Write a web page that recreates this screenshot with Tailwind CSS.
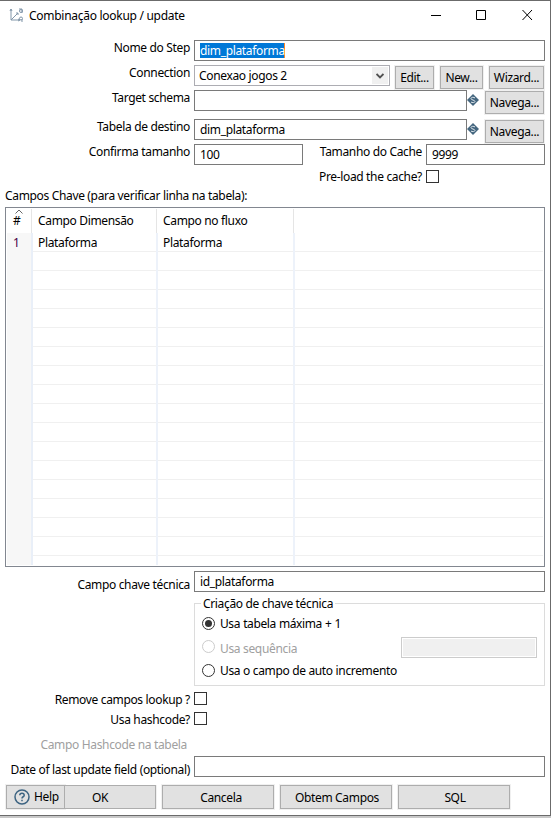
<!DOCTYPE html>
<html lang="pt-BR"><head><meta charset="utf-8"><title>Combinação lookup / update</title>
<script src="https://cdn.jsdelivr.net/npm/@tailwindcss/browser@4"></script></head>
<body class="w-[551px] h-[818px] overflow-hidden bg-[#c8c8c8] font-['Noto_Sans','Open_Sans',sans-serif] text-[12px] leading-4 tracking-[-0.34px] text-black whitespace-nowrap">
<main class="w-[551px] h-[816px] border-t border-r border-b border-[#6b6b6b] bg-white flex flex-col">
  <header class="h-[39px] shrink-0 flex">
    <svg class="ml-[9px] mt-[6px] size-4 shrink-0" viewBox="0 0 16 16" fill="none" stroke="#8297aa"><path d="M2 2v11h9M2 13l7-7M1 4l1-2 1 2M7 6h2v2M9 12l2 1-2 1"/><circle cx="12" cy="4" r="1.5"/><path d="M10 2h3v4"/><circle cx="12" cy="11.5" r="1.5"/><path d="M13 12v3"/></svg>
    <h1 class="ml-1 mt-[7px] w-[370px] tracking-[-0.28px]">Combinação lookup / update</h1>
    <svg class="ml-[31px] mt-[9px] w-[104px] h-[12px]" viewBox="0 0 104 12" fill="none" stroke="#000"><path d="M1 5.5h10"/><path d="M46.500 .5h9v9h-9z"/><path d="M92.500 0l9.500 10M102 0l-9.500 10"/></svg>
  </header>
  <section class="h-[25px] shrink-0 flex items-start">
    <label class="w-[190px] text-right">Nome do Step</label>
    <div class="ml-1 w-[351px] h-[21px] border border-[#7a7a7a] pl-[5px] pt-[2px]"><span class="inline-block h-[15px] leading-[15px] w-[85px] bg-[#0078d7] text-white border-r border-[#ff8728]">dim_plataforma</span></div>
  </section>
  <section class="h-[25px] shrink-0 flex items-start">
    <label class="w-[190px] text-right">Connection</label>
    <div class="ml-1 w-[196px] h-[21px] border border-[#adadb3] pl-1 flex items-center justify-between"><span>Conexao jogos 2</span><span class="w-4 h-[17px] mr-px bg-[#f0f0f0] flex items-center justify-center"><svg class="w-2 h-[6px]" viewBox="0 0 8 6" fill="none" stroke="#505050" stroke-width="1.9"><path d="M.5 1L4 4.500 7.500 1"/></svg></span></div>
    <button class="ml-[5px] mt-px w-[39px] h-[23px] border border-[#adadad] bg-[#e1e1e1] outline outline-[#f0f0f0]">Edit...</button>
    <button class="ml-[6px] mt-px w-[43px] h-[23px] border border-[#adadad] bg-[#e1e1e1] outline outline-[#f0f0f0]">New...</button>
    <button class="ml-[6px] mt-px w-[55px] h-[23px] border border-[#adadad] bg-[#e1e1e1] outline outline-[#f0f0f0]">Wizard...</button>
  </section>
  <section class="h-[29px] shrink-0 flex items-start">
    <label class="w-[190px] text-right">Target schema</label>
    <div class="ml-1 w-[273px] h-[21px] border border-[#7a7a7a]"></div>
    <svg class="mt-[4px] size-3" viewBox="0 0 12 12"><path d="M6 0l6 6-6 6-6-6z" fill="#44667f"/><path d="M8 4C7 3 4 3 4 4.600S8 6 8 7.400 5 9 4 8" fill="none" stroke="#e1e8ed"/></svg>
    <button class="ml-[6px] mt-px w-[59px] h-[23px] border border-[#adadad] bg-[#e1e1e1] outline outline-[#f0f0f0]">Navega...</button>
  </section>
  <section class="h-[25px] shrink-0 flex items-start">
    <label class="w-[190px] text-right">Tabela de destino</label>
    <div class="ml-1 w-[273px] h-[21px] border border-[#7a7a7a] pl-[5px] pt-[2px]">dim_plataforma</div>
    <svg class="mt-[4px] size-3" viewBox="0 0 12 12"><path d="M6 0l6 6-6 6-6-6z" fill="#44667f"/><path d="M8 4C7 3 4 3 4 4.600S8 6 8 7.400 5 9 4 8" fill="none" stroke="#e1e8ed"/></svg>
    <button class="ml-[6px] mt-px w-[59px] h-[23px] border border-[#adadad] bg-[#e1e1e1] outline outline-[#f0f0f0]">Navega...</button>
  </section>
  <section class="h-[25px] shrink-0 flex items-start">
    <label class="w-[190px] text-right">Confirma tamanho</label>
    <div class="ml-1 w-[109px] h-[21px] border border-[#7a7a7a] pl-[5px] pt-[2px]">100</div>
    <label class="w-[119px] text-right">Tamanho do Cache</label>
    <div class="ml-1 w-[119px] h-[21px] border border-[#7a7a7a] pl-[5px] pt-[2px]">9999</div>
  </section>
  <section class="h-[19px] shrink-0 flex items-start">
    <label class="w-[422px] text-right">Pre-load the cache?</label><span class="ml-1 mt-px size-[13px] border border-[#333]"></span>
  </section>
  <h2 class="h-[19px] shrink-0 pl-[5px]">Campos Chave (para verificar linha na tabela):</h2>
  <section class="ml-[5px] w-[540px] h-[360px] shrink-0 border border-[#828790] flex flex-col overflow-hidden">
    <div class="h-[25px] shrink-0 flex pt-px">
      <div class="w-[26px] border-r border-[#e5e5e5] pl-[6px] relative"><svg class="absolute left-[9px] top-0 w-2 h-[5px]" viewBox="0 0 8 5" fill="none" stroke="#666"><path d="M.5 4.500L4 1l3.500 3.500"/></svg><span class="inline-block mt-1 pl-px">#</span></div>
      <div class="w-[125px] border-r border-[#e5e5e5] pl-[6px] pt-1">Campo Dimensão</div>
      <div class="w-[137px] border-r border-[#e5e5e5] pl-[6px] pt-1">Campo no fluxo</div>
    </div>
    <div id="rows" class="ml-px mr-px h-[332px] shrink-0 overflow-hidden"></div>
  </section>
  <section class="h-[32px] shrink-0 pt-1 flex items-start">
    <label class="w-[190px] mt-[6px] text-right">Campo chave técnica</label>
    <div class="ml-1 w-[351px] h-[21px] border border-[#7a7a7a] pl-[5px] pt-[2px]">id_plataforma</div>
  </section>
  <fieldset class="relative ml-[194px] mt-[4px] w-[351px] h-[83px] shrink-0 border border-[#dcdcdc] pt-[11px] pl-[7px]">
    <div class="absolute left-[6px] -top-[8px] bg-white px-[2px]">Criação de chave técnica</div>
    <div class="h-[24px] flex items-start"><span class="mt-[2px] size-[13px] rounded-full border border-[#333] flex items-center justify-center"><i class="size-[7px] rounded-full bg-[#333]"></i></span><span class="ml-[5px] mt-px tracking-[-0.4px] [word-spacing:0.4px]">Usa tabela máxima + 1</span></div>
    <div class="h-[23px] flex items-start text-[#a0a0a0]"><span class="mt-px size-[13px] rounded-full border border-[#ccc]"></span><span class="ml-[5px] w-[181px] mt-[2px]">Usa sequência</span><span class="-mt-[2px] w-[136px] h-[21px] border border-[#ccc] p-px"><i class="block size-full bg-[#f0f0f0]"></i></span></div>
    <div class="h-[22px] flex items-start"><span class="mt-[2px] size-[13px] rounded-full border border-[#333]"></span><span class="ml-[5px] mt-px">Usa o campo de auto incremento</span></div>
  </fieldset>
  <section class="mt-[6px] h-[20px] shrink-0 flex items-start"><label class="w-[190px] text-right">Remove campos lookup ?</label><span class="ml-1 size-[13px] border border-[#333]"></span></section>
  <section class="h-[25px] shrink-0 flex items-start"><label class="w-[190px] text-right">Usa hashcode?</label><span class="ml-1 size-[13px] border border-[#333]"></span></section>
  <div class="h-[19px] shrink-0 w-[187px] text-right text-[#a0a0a0]">Campo Hashcode na tabela</div>
  <section class="h-[29px] shrink-0 flex items-start"><label class="w-[190px] mt-[6px] text-right">Date of last update field (optional)</label><div class="ml-1 w-[351px] h-[21px] border border-[#7a7a7a]"></div></section>
  <footer class="flex h-[24px] shrink-0 ml-[6px]">
    <button class="w-[59px] border border-[#adadad] bg-[#e1e1e1] outline outline-[#f0f0f0] flex items-center pl-[7px] gap-1"><svg class="size-4" viewBox="0 0 16 16" fill="none" stroke="#3d6482" stroke-width="1.5"><circle cx="8" cy="8" r="7"/><path d="M5.800 6.300C5.800 3.500 10.200 3.500 10.200 6.200 10.200 8 8 7.500 8 9.500M8 10.700v1.500"/></svg><span>Help</span></button>
    <button class="w-[91px] border border-l-0 border-[#adadad] bg-[#e1e1e1] shadow-[1px_0_0_#f0f0f0] pr-[20px] pt-px">OK</button>
    <button class="ml-[6px] w-[112px] border border-[#adadad] bg-[#e1e1e1] outline outline-[#f0f0f0] pl-[6px] pt-px">Cancela</button>
    <button class="ml-[6px] w-[112px] border border-[#adadad] bg-[#e1e1e1] outline outline-[#f0f0f0] pl-[2px] pt-px">Obtem Campos</button>
    <button class="ml-[6px] w-[112px] border border-[#adadad] bg-[#e1e1e1] outline outline-[#f0f0f0] pl-[2px] pt-px">SQL</button>
  </footer>
</main>
<script>
const rows=document.getElementById('rows');
rows.innerHTML=Array.from({length:18},(_,i)=>`<div class="flex h-[19px] border-b border-[#f0f0f0]">
<div class="h-[19px] w-[26px] shrink-0 border-r-2 border-[#e9eff8] bg-[#f7f7f7] pl-[6px] pt-[2px] text-[#480048]">${i?'':'1'}</div>
<div class="h-[19px] w-[125px] shrink-0 border-r-2 border-[#edf2fa] pl-[5px] pt-[2px]">${i?'':'Plataforma'}</div>
<div class="h-[19px] w-[137px] shrink-0 border-r-2 border-[#edf2fa] pl-[5px] pt-[2px]">${i?'':'Plataforma'}</div></div>`).join('');
</script>
</body></html>
